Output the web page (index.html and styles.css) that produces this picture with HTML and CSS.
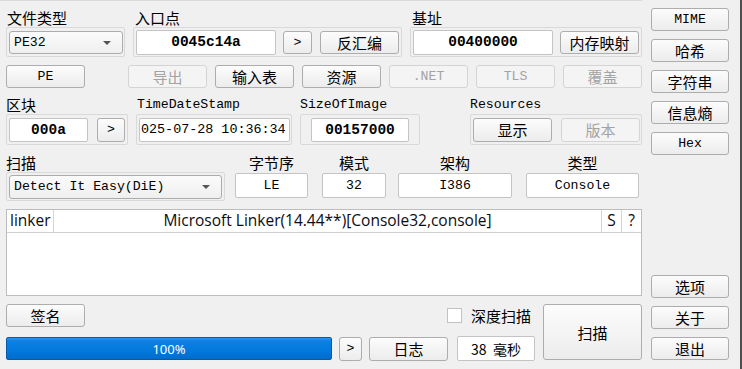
FILE: index.html
```html
<!DOCTYPE html>
<html>
<head>
<meta charset="utf-8">
<link rel="stylesheet" href="styles.css">
</head>
<body>
<div class="app">
  <div class="main">
    <div class="topline"></div>
    <div class="row row-a">
      <div class="grp w119">
        <div class="lbl zh pl1">文件类型</div>
        <div class="frame h30 pad-a1">
          <div class="combo w114 h23"><span class="ctext">PE32</span><i class="arrow"></i></div>
        </div>
      </div>
      <div class="grp w269">
        <div class="lbl zh pl2">入口点</div>
        <div class="frame h30">
          <div class="edit bold w140 h25">0045c14a</div>
          <div class="btn w29 h23 ml7">&gt;</div>
          <div class="btn zh w79 h23 ml8">反汇编</div>
        </div>
      </div>
      <div class="grp w232">
        <div class="lbl zh pl2">基址</div>
        <div class="frame h30">
          <div class="edit bold w140 h25">00400000</div>
          <div class="btn zh w79 h23 ml7">内存映射</div>
        </div>
      </div>
    </div>

    <div class="row row-b">
      <div class="btn w79 h23">PE</div>
      <div class="btn zh dis w79 h23 ml43">导出</div>
      <div class="btn zh w79 h23 ml8">输入表</div>
      <div class="btn zh w79 h23 ml8">资源</div>
      <div class="btn dis w79 h23 ml8">.NET</div>
      <div class="btn dis w79 h23 ml8">TLS</div>
      <div class="btn zh dis w79 h23 ml8">覆盖</div>
    </div>

    <div class="row row-c">
      <div class="grp w122">
        <div class="lbl zh">区块</div>
        <div class="frame h31">
          <div class="edit bold w79 h24">000a</div>
          <div class="btn w28 h24 ml9">&gt;</div>
        </div>
      </div>
      <div class="grp w156 ml8">
        <div class="lbl pl1">TimeDateStamp</div>
        <div class="frame h31 pad-a1">
          <div class="edit left w151 h24">025-07-28 10:36:34</div>
        </div>
      </div>
      <div class="grp w120 ml8">
        <div class="lbl">SizeOfImage</div>
        <div class="frame h31 pad-s10">
          <div class="edit bold w98 h24">00157000</div>
        </div>
      </div>
      <div class="grp w172 ml50">
        <div class="lbl">Resources</div>
        <div class="frame h31 pad-a1">
          <div class="btn zh w79 h24">显示</div>
          <div class="btn zh dis w79 h24 ml9">版本</div>
        </div>
      </div>
    </div>

    <div class="row row-d">
      <div class="grp w219">
        <div class="lbl zh">扫描</div>
        <div class="frame h29">
          <div class="combo w213 h24"><span class="ctext">Detect It Easy(DiE)</span><i class="arrow"></i></div>
        </div>
      </div>
      <div class="col w73 ml10">
        <div class="lbl zh center">字节序</div>
        <div class="edit w73 h25 mt1">LE</div>
      </div>
      <div class="col w64 ml14">
        <div class="lbl zh center">模式</div>
        <div class="edit w64 h25 mt1">32</div>
      </div>
      <div class="col w114 ml12">
        <div class="lbl zh center">架构</div>
        <div class="edit w114 h25 mt1">I386</div>
      </div>
      <div class="col w113 ml14">
        <div class="lbl zh center">类型</div>
        <div class="edit w113 h25 mt1">Console</div>
      </div>
    </div>

    <div class="result">
      <div class="rhead">
        <div class="cell c-type">linker</div>
        <div class="cell c-name">Microsoft Linker(14.44**)[Console32,console]</div>
        <div class="cell c-s">S</div>
        <div class="cell c-q">?</div>
      </div>
    </div>

    <div class="bottom">
      <div class="bleft">
        <div class="row row-e">
          <div class="btn zh w79 h23">签名</div>
          <div class="check"></div>
          <div class="zh checklbl">深度扫描</div>
        </div>
        <div class="row row-f">
          <div class="progress"><span>100%</span></div>
          <div class="btn w23 h24 ml7">&gt;</div>
          <div class="btn zh w79 h24 ml7">日志</div>
          <div class="edit zh w78 h25 ml9 timeedit">38&nbsp;&nbsp;毫秒</div>
        </div>
      </div>
      <div class="btn zh bigbtn">扫描</div>
    </div>
  </div>

  <div class="side">
    <div class="btn sbtn">MIME</div>
    <div class="btn zh sbtn">哈希</div>
    <div class="btn zh sbtn">字符串</div>
    <div class="btn zh sbtn">信息熵</div>
    <div class="btn sbtn">Hex</div>
    <div class="btn zh sbtn push">选项</div>
    <div class="btn zh sbtn">关于</div>
    <div class="btn zh sbtn">退出</div>
  </div>
  <div class="edge"></div>
</div>
</body>
</html>
```

FILE: styles.css
```css
html, body {
  margin: 0;
  padding: 0;
  background: #f0f0f0;
}
body {
  font-family: "Liberation Mono", "Noto Sans CJK SC", monospace;
  font-size: 13.2px;
  color: #000;
  overflow: hidden;
}
.app {
  width: 742px;
  height: 369px;
  display: flex;
  background: #f0f0f0;
  overflow: hidden;
}
.main {
  width: 645px;
  flex: none;
  display: flex;
  flex-direction: column;
}
.topline {
  width: 642px;
  height: 1px;
  background: #dadada;
}
.row {
  display: flex;
  align-items: flex-start;
  padding-left: 6px;
}
.row-a { margin-top: 7px; gap: 8px; }
.row-b { margin-top: 8px; }
.row-c { margin-top: 7px; }
.row-d { margin-top: 8px; }

.zh {
  font-family: "Noto Sans CJK SC", sans-serif;
  font-size: 15px;
}
.grp, .col {
  display: flex;
  flex-direction: column;
  flex: none;
}
.lbl {
  height: 19px;
  line-height: 19px;
  white-space: nowrap;
}
.lbl.center { text-align: center; }
.pl1 { padding-left: 1px; }
.pl2 { padding-left: 2px; }

.frame {
  box-sizing: border-box;
  border: 1px solid #d9d9d9;
  border-radius: 2px;
  display: flex;
  align-items: center;
  padding-left: 2px;
  padding-right: 2px;
}
.pad-a1 { padding-right: 1px; }
.pad-s10 { padding-left: 10px; }
.h29 { height: 29px; }
.h30 { height: 30px; }
.h31 { height: 31px; }
.h23 { height: 23px; }
.h24 { height: 24px; }
.h25 { height: 25px; }

.w23 { width: 23px; }
.w28 { width: 28px; }
.w29 { width: 29px; }
.w64 { width: 64px; }
.w73 { width: 73px; }
.w78 { width: 78px; }
.w79 { width: 79px; }
.w98 { width: 98px; }
.w113 { width: 113px; }
.w114 { width: 114px; }
.w119 { width: 119px; }
.w120 { width: 120px; }
.w122 { width: 122px; }
.w140 { width: 140px; }
.w151 { width: 151px; }
.w156 { width: 156px; }
.w172 { width: 172px; }
.w213 { width: 213px; }
.w219 { width: 219px; }
.w232 { width: 232px; }
.w269 { width: 269px; }

.ml7 { margin-left: 7px; }
.ml8 { margin-left: 8px; }
.ml9 { margin-left: 9px; }
.ml10 { margin-left: 10px; }
.ml12 { margin-left: 12px; }
.ml14 { margin-left: 14px; }
.ml43 { margin-left: 43px; }
.ml50 { margin-left: 50px; }
.mt1 { margin-top: 1px; }

.btn {
  box-sizing: border-box;
  flex: none;
  display: flex;
  align-items: center;
  justify-content: center;
  border: 1px solid #adadad;
  border-radius: 3px;
  background: linear-gradient(#fcfcfc, #ececec);
  white-space: nowrap;
}
.btn.dis {
  border-color: #d4d4d4;
  background: #f4f4f4;
  color: #a3a3a3;
}
.edit {
  box-sizing: border-box;
  flex: none;
  display: flex;
  align-items: center;
  justify-content: center;
  background: #fff;
  border: 1px solid #c4c4c4;
  border-radius: 2px;
  white-space: nowrap;
  overflow: hidden;
}
.edit.left {
  justify-content: flex-start;
  padding-left: 1px;
  font-size: 13.4px;
}
.bold {
  font-weight: bold;
  font-size: 14.5px;
}
.combo {
  box-sizing: border-box;
  flex: none;
  display: flex;
  align-items: center;
  border: 1px solid #acacac;
  border-radius: 3px;
  background: linear-gradient(#fbfbfb, #efefef);
  padding-left: 4px;
  position: relative;
}
.ctext { white-space: nowrap; }
.arrow {
  position: absolute;
  right: 11px;
  top: 9px;
  width: 0;
  height: 0;
  border-left: 4px solid transparent;
  border-right: 4px solid transparent;
  border-top: 4px solid #555;
}

.result {
  box-sizing: border-box;
  margin-top: 8px;
  margin-left: 6px;
  width: 636px;
  height: 87px;
  background: #fff;
  border: 1px solid #bdbdbd;
}
.rhead {
  display: grid;
  grid-template-columns: 46px 1fr 20px 20px;
  height: 23px;
  box-sizing: border-box;
  border-bottom: 1px solid #cfcfcf;
  font-family: "Open Sans", "Noto Sans", sans-serif;
  font-size: 15.5px;
  color: #0c0c14;
}
.cell {
  line-height: 21px;
  white-space: nowrap;
  overflow: hidden;
}
.c-type { padding-left: 3px; }
.c-name { text-align: center; border-left: 1px solid #d4d4d4; }
.c-s { text-align: center; border-left: 1px solid #d4d4d4; }
.c-q { text-align: center; border-left: 1px solid #d4d4d4; }

.bottom {
  display: flex;
  margin-top: 8px;
  padding-left: 6px;
  height: 56px;
}
.bleft {
  width: 531px;
  display: flex;
  flex-direction: column;
}
.bleft .row { padding-left: 0; }
.row-e { align-items: center; height: 23px; }
.row-f { margin-top: 9px; align-items: center; }
.check {
  box-sizing: border-box;
  width: 15px;
  height: 15px;
  margin-left: 362px;
  background: #fff;
  border: 1px solid #c2c2c2;
}
.checklbl { margin-left: 9px; }
.progress {
  box-sizing: border-box;
  width: 326px;
  height: 23px;
  border: 1px solid #0a5aa6;
  border-radius: 2px;
  background: linear-gradient(#2f95ea 0, #0c80e4 15%, #0279dc 60%, #006dcc 100%);
  display: flex;
  align-items: center;
  justify-content: center;
  color: #fff;
  font-family: "Noto Sans", sans-serif;
  font-size: 13px;
}
.timeedit { font-size: 14px; }
.bigbtn {
  margin-left: 6px;
  width: 99px;
  height: 56px;
}

.side {
  margin-left: 6px;
  width: 78px;
  flex: none;
  display: flex;
  flex-direction: column;
  gap: 8px;
  padding-top: 8px;
  padding-bottom: 9px;
  box-sizing: border-box;
  height: 369px;
}
.sbtn {
  width: 78px;
  height: 23px;
}
.sbtn.push { margin-top: auto; }
.edge {
  margin-left: 11px;
  width: 2px;
  height: 369px;
  background: #4e4e4e;
  flex: none;
}
```
